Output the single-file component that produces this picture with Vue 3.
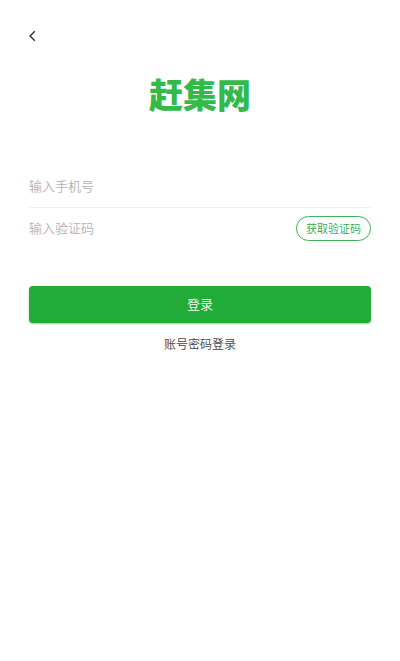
<script setup>
import { ref } from 'vue'

const phone = ref('')
const code = ref('')
</script>

<template>
  <main class="page">
    <header class="bar">
      <button class="back" type="button" aria-label="返回">
        <svg width="8" height="12" viewBox="0 0 8 12" fill="none" stroke="#333" stroke-width="1.5">
          <path d="M5.8 1.2L1 6L5.8 10.8" />
        </svg>
      </button>
    </header>

    <h1 class="logo">赶集网</h1>

    <form class="form" @submit.prevent>
      <div class="field lined">
        <input v-model="phone" class="input" type="tel" placeholder="输入手机号" aria-label="输入手机号" />
      </div>
      <div class="field">
        <input v-model="code" class="input" type="text" placeholder="输入验证码" aria-label="输入验证码" />
        <button class="get-code" type="button">获取验证码</button>
      </div>
      <button class="submit" type="submit">登录</button>
    </form>

    <a class="switch" href="#">账号密码登录</a>
  </main>
</template>

<style>
body {
  margin: 0;
  background: #fff;
}
</style>

<style scoped>
.page {
  display: flex;
  flex-direction: column;
  padding: 24px 29px;
  font-family: "Noto Sans CJK SC", sans-serif;
  font-weight: 350;
}

button,
input {
  margin: 0;
  padding: 0;
  border: 0;
  background: none;
  font-family: inherit;
  font-weight: inherit;
}

button {
  cursor: pointer;
}

.bar {
  display: flex;
  height: 24px;
}

.back {
  display: flex;
  align-items: center;
  width: 24px;
}

.logo {
  margin: 22px 0 0;
  font-size: 34px;
  line-height: 48px;
  font-weight: 900;
  text-align: center;
  color: #34b94b;
}

.form {
  display: flex;
  flex-direction: column;
  margin-top: 48px;
}

.field {
  display: flex;
  align-items: center;
  height: 41px;
}

.lined {
  border-bottom: 1px solid #f0f0f0;
}

.input {
  flex: 1;
  min-width: 0;
  height: 24px;
  padding-bottom: 2px;
  font-size: 13px;
  color: #333;
  outline: none;
}

.input::placeholder {
  color: #b2b2b6;
  opacity: 1;
}

.get-code {
  width: 75px;
  height: 25px;
  padding-bottom: 2px;
  border: 1px solid #3fb157;
  border-radius: 13px;
  font-size: 11px;
  line-height: 16px;
  color: #2fa848;
}

.submit {
  height: 37px;
  margin-top: 37px;
  padding-bottom: 2px;
  border-radius: 4px;
  background: #21ab38;
  box-shadow: 0 1px 2px rgba(33, 100, 45, 0.4);
  font-size: 13px;
  color: #fff;
}

.switch {
  align-self: center;
  margin-top: 12px;
  font-size: 12px;
  line-height: 18px;
  color: #444;
  text-decoration: none;
}
</style>
